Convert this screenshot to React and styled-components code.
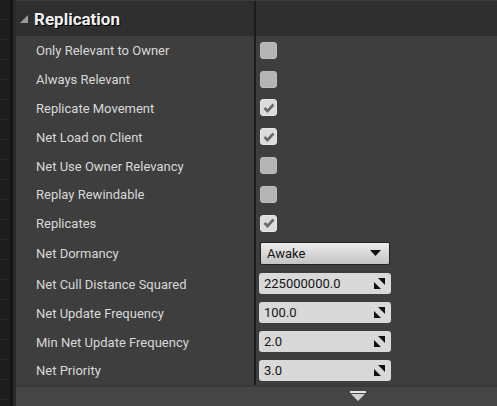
import React from "react";
import styled, { createGlobalStyle } from "styled-components";

const Global = createGlobalStyle`
  html, body { margin: 0; padding: 0; background: #1d1d1d; }
  body { width: 497px; height: 406px; overflow: hidden; font-family: Roboto, "Noto Sans", sans-serif; }
`;

const Frame = styled.div`
  display: flex;
  width: 497px;
  height: 406px;
`;

const Outline = styled.div`
  width: 10px;
  background: repeating-linear-gradient(to bottom, #1d1d1d 0 19px, #292929 19px 20px);
`;

const Gutter = styled.div`
  width: 6px;
  display: flex;
  & > div:first-child { width: 3px; background: #141414; }
  & > div:last-child { width: 3px; background: #2a2a2a; }
`;

const Panel = styled.div`
  flex: 1;
  display: flex;
  flex-direction: column;
  background: #333;
  border-top: 1px solid #3b3b3b;
`;

const Grid = styled.div`
  display: grid;
  grid-template-columns: 238px 2px 1fr;
`;

const Header = styled(Grid)`
  height: 35px;
  background: #2f2f2f;
`;

const HeaderTitle = styled.div`
  display: flex;
  align-items: center;
  gap: 5px;
  padding-left: 3px;
  color: #f0f0f0;
  font-weight: 700;
  font-size: 17px;
  text-shadow: 1px 1px 0 #000;
`;

const Divider = styled.div`
  background: #1c1c1c;
`;

const Rows = styled.div`
  background: #3e3e3e;
  display: flex;
  flex-direction: column;
  height: 349px;
`;

const Row = styled(Grid)`
  height: ${(p) => p.$h}px;
`;

const Name = styled.div`
  display: flex;
  align-items: center;
  padding-left: 20px;
  padding-top: 1px;
  color: #d8d8d8;
  font-size: 13px;
`;

const Value = styled.div`
  display: flex;
  align-items: center;
  padding-left: ${(p) => p.$pad ?? 4}px;
`;

const Check = styled.div`
  width: 17px;
  height: 17px;
  box-sizing: border-box;
  border-radius: 3px;
  background: ${(p) => (p.$on ? "#dcdcdc" : "#b4b4b4")};
  border: 1px solid ${(p) => (p.$on ? "#e6e6e6" : "#bdbdbd")};
  display: flex;
  align-items: center;
  justify-content: center;
`;

const Combo = styled.div`
  width: 130px;
  height: 23px;
  box-sizing: border-box;
  border: 1px solid #242424;
  border-radius: 2px;
  background: linear-gradient(to bottom, #ececec, #c4c4c4);
  display: flex;
  align-items: center;
  justify-content: space-between;
  padding: 0 8px 0 6px;
  color: #151515;
  font-size: 13px;
`;

const NumBox = styled.div`
  width: 132px;
  height: 21px;
  box-sizing: border-box;
  border-radius: 3px;
  background: #d9d9d9;
  display: flex;
  align-items: center;
  justify-content: space-between;
  padding: 0 6px 0 5px;
  color: #151515;
  font-size: 13px;
`;

const Gap = styled.div`
  height: 2px;
  background: #383838;
`;

const Footer = styled.div`
  flex: 1;
  background: #454545;
  display: flex;
  padding-left: 334px;
  padding-top: 4px;
`;

const Tick = () => (
  <svg width="12" height="10" viewBox="0 0 12 10">
    <path d="M1.5 5 L4.5 8 L10.5 1.5" fill="none" stroke="#6a6a6a" strokeWidth="2.6" />
  </svg>
);

const SpinIcon = () => (
  <svg width="11" height="11" viewBox="0 0 11 11">
    <polygon points="4,0 11,0 11,7" fill="#111" />
    <polygon points="0,4 0,11 7,11" fill="#111" />
  </svg>
);

const ComboArrow = () => (
  <svg width="11" height="6" viewBox="0 0 11 6">
    <polygon points="0,0 11,0 5.5,6" fill="#111" />
  </svg>
);

const Collapse = () => (
  <svg width="10" height="10" viewBox="0 0 10 10">
    <polygon points="1,9 9,9 9,1" fill="#9a9a9a" />
  </svg>
);

const MoreArrow = () => (
  <svg width="16" height="10" viewBox="0 0 16 10">
    <rect x="0" y="0" width="16" height="2" fill="#e6e6e6" />
    <polygon points="1,3 15,3 8,10" fill="#cfcfcf" />
  </svg>
);

const checks = [
  ["Only Relevant to Owner", false],
  ["Always Relevant", false],
  ["Replicate Movement", true],
  ["Net Load on Client", true],
  ["Net Use Owner Relevancy", false],
  ["Replay Rewindable", false],
  ["Replicates", true],
];

const nums = [
  ["Net Cull Distance Squared", "225000000.0"],
  ["Net Update Frequency", "100.0"],
  ["Min Net Update Frequency", "2.0"],
  ["Net Priority", "3.0"],
];

export default function App() {
  return (
    <>
      <Global />
      <Frame>
        <Outline />
        <Gutter><div /><div /></Gutter>
        <Panel>
          <Header>
            <HeaderTitle><Collapse />Replication</HeaderTitle>
            <Divider />
            <div />
          </Header>
          <Rows>
            {checks.map(([n, on]) => (
              <Row key={n} $h={28.8}>
                <Name>{n}</Name>
                <Divider />
                <Value><Check $on={on}>{on && <Tick />}</Check></Value>
              </Row>
            ))}
            <Row $h={31.6}>
              <Name>Net Dormancy</Name>
              <Divider />
              <Value><Combo><span>Awake</span><ComboArrow /></Combo></Value>
            </Row>
            {nums.map(([n, v]) => (
              <Row key={n} $h={29}>
                <Name>{n}</Name>
                <Divider />
                <Value $pad={3}><NumBox><span>{v}</span><SpinIcon /></NumBox></Value>
              </Row>
            ))}
          </Rows>
          <Gap />
          <Footer><MoreArrow /></Footer>
        </Panel>
      </Frame>
    </>
  );
}
